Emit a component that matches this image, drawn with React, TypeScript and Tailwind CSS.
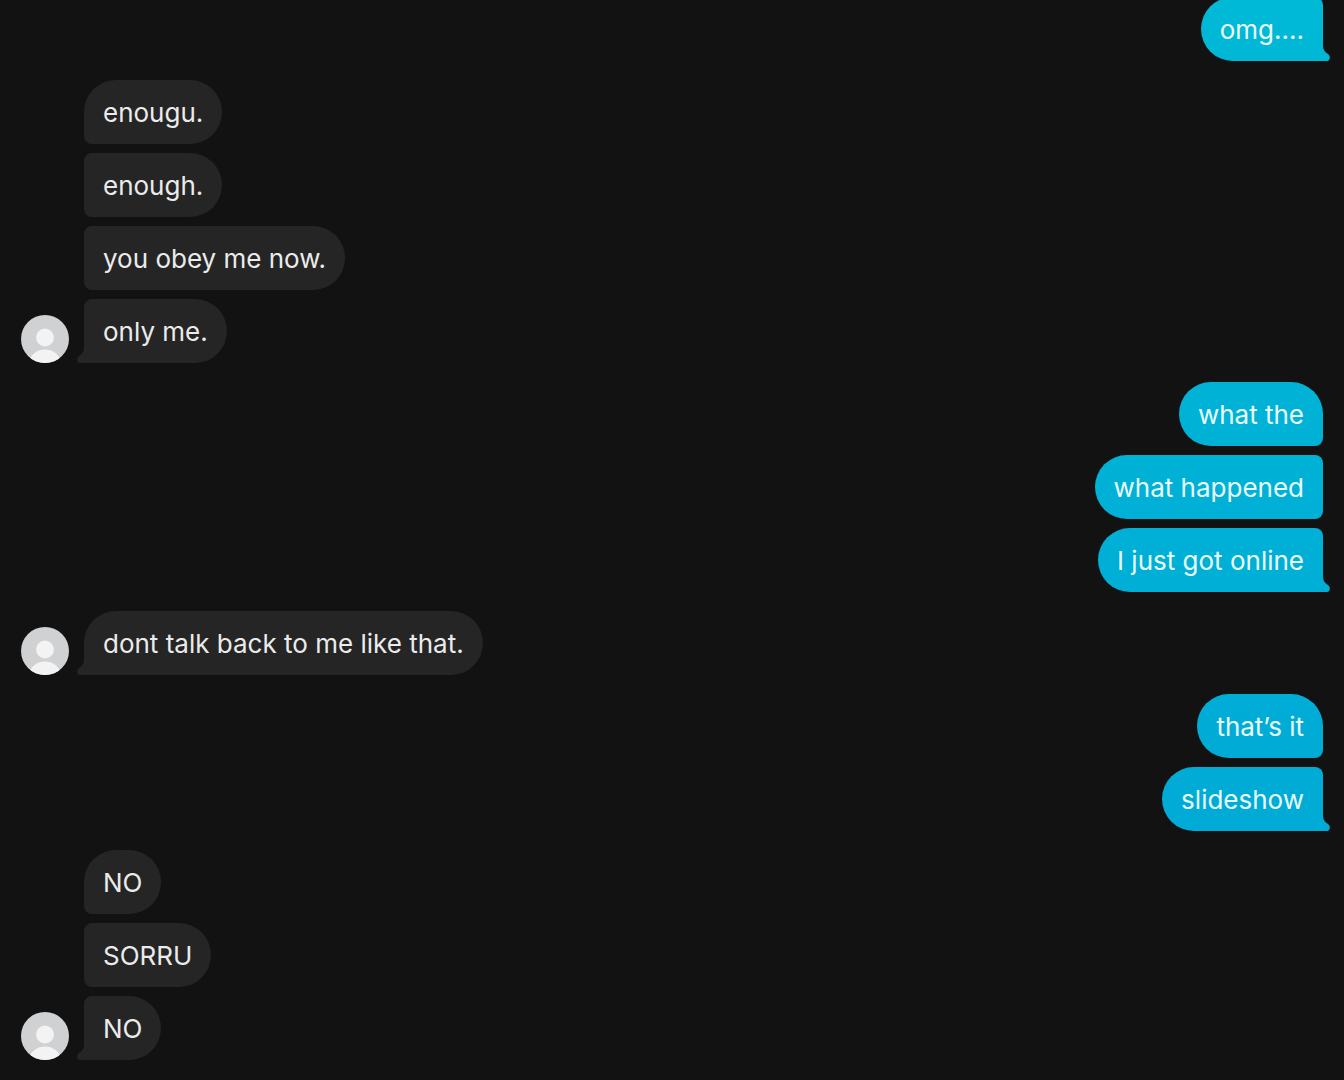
type Group = {
  from: "me" | "them";
  messages: string[];
};

const groups: Group[] = [
  { from: "me", messages: ["omg...."] },
  { from: "them", messages: ["enougu.", "enough.", "you obey me now.", "only me."] },
  { from: "me", messages: ["what the", "what happened", "I just got online"] },
  { from: "them", messages: ["dont talk back to me like that."] },
  { from: "me", messages: ["that’s it", "slideshow"] },
  { from: "them", messages: ["NO", "SORRU", "NO"] },
];

function Avatar() {
  return (
    <svg viewBox="0 0 48 48" className="size-12 shrink-0 rounded-full" role="img" aria-label="Contact">
      <rect width="48" height="48" fill="#d0d1d3" />
      <circle cx="24" cy="22.5" r="9" fill="#f3f3f4" />
      <path d="M7 48C10 39 16 34.500 24 34.500S38 39 41 48Z" fill="#f3f3f4" />
    </svg>
  );
}

function Bubble({ text, mine, first, last }: { text: string; mine: boolean; first: boolean; last: boolean }) {
  const fill = mine
    ? "bg-linear-to-b from-[#00b9d6] to-[#00a6d6] bg-fixed text-[#e9fcff]"
    : "bg-[#252525] text-[#ebebeb]";
  const side = mine ? "rounded-l-[32px]" : "rounded-r-[32px]";
  const top = mine
    ? first ? "rounded-tr-[32px]" : "rounded-tr-lg"
    : first ? "rounded-tl-[32px]" : "rounded-tl-lg";
  const bottom = mine
    ? last ? "rounded-br-none" : "rounded-br-lg"
    : last ? "rounded-bl-none" : "rounded-bl-lg";
  const tail = mine
    ? "left-full [clip-path:path('M0_0C0_5_2_7_5_9C8_11_7_16_4_16L0_16Z')]"
    : "right-full [clip-path:path('M7_0C7_5_5_7_2_9C-1_11_0_16_3_16L7_16Z')]";
  return (
    <li className={`relative px-[19px] pt-[17px] pb-[15px] text-[26px] leading-8 ${fill} ${side} ${top} ${bottom}`}>
      {text}
      {last && <span aria-hidden="true" className={`absolute bottom-0 h-4 w-[7px] ${fill} ${tail}`} />}
    </li>
  );
}

export default function App() {
  return (
    <main className="flex h-screen flex-col justify-end gap-[19px] overflow-hidden bg-[#121212] px-[21px] pb-5 font-['Inter',sans-serif]">
      {groups.map((group, g) => {
        const mine = group.from === "me";
        return (
          <section key={g} className={`flex shrink-0 items-end gap-[15px] ${mine ? "justify-end" : "justify-start"}`}>
            {!mine && <Avatar />}
            <ul className={`flex flex-col gap-[9px] ${mine ? "items-end" : "items-start"}`}>
              {group.messages.map((text, i) => (
                <Bubble
                  key={i}
                  text={text}
                  mine={mine}
                  first={i === 0 && g !== 0}
                  last={i === group.messages.length - 1}
                />
              ))}
            </ul>
          </section>
        );
      })}
    </main>
  );
}
